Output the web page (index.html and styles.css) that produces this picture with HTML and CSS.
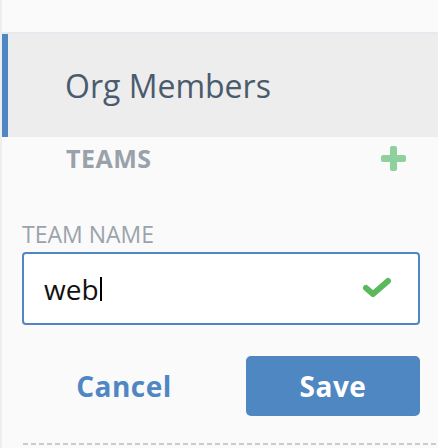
FILE: index.html
```html
<!DOCTYPE html>
<html>
<head>
<meta charset="utf-8">
<link rel="stylesheet" href="styles.css">
</head>
<body>
<div class="panel">
  <div class="topbar"></div>
  <div class="nav-item">Org Members</div>
  <div class="teams-row">
    <span class="teams-title">TEAMS</span>
    <svg class="plus" width="25" height="25" viewBox="0 0 25 25"><rect x="9" y="0" width="7" height="25" rx="2" fill="#8fd19e"/><rect x="0" y="9" width="25" height="7" rx="2" fill="#8fd19e"/></svg>
  </div>
  <div class="form">
    <div class="label">TEAM NAME</div>
    <div class="input">
      <span class="value">web</span><span class="caret"></span>
      <svg class="check" width="32" height="24" viewBox="0 0 32 24"><polyline points="4,11 11,17 26,4" fill="none" stroke="#5cb85c" stroke-width="6" stroke-linecap="round" stroke-linejoin="round"/></svg>
    </div>
    <div class="actions">
      <div class="cancel">Cancel</div>
      <div class="save">Save</div>
    </div>
    <div class="dashed"></div>
  </div>
</div>
</body>
</html>
```
FILE: styles.css
```css
html, body {
  margin: 0;
  padding: 0;
  background: #fafafa;
  font-family: "Open Sans", "Noto Sans", sans-serif;
}
.panel {
  border-left: 2px solid #eceeef;
  min-height: 448px;
  box-sizing: border-box;
  display: flex;
  flex-direction: column;
}
.topbar {
  height: 32px;
  border-bottom: 2px solid #e6eaee;
}
.nav-item {
  height: 103px;
  background: #ededed;
  border-left: 6px solid #4f87c2;
  padding-left: 57px;
  display: flex;
  align-items: center;
  font-size: 32px;
  line-height: 32px;
  color: #4a5b6e;
}
.teams-row {
  margin-top: 9px;
  padding: 0 32px 0 64px;
  height: 25px;
  display: flex;
  align-items: center;
  justify-content: space-between;
}
.teams-title {
  font-size: 25px;
  line-height: 25px;
  font-weight: 700;
  color: #99a1aa;
  letter-spacing: 0.5px;
}
.plus {
  display: block;
}
.form {
  padding: 0 18px 0 20px;
  display: flex;
  flex-direction: column;
}
.label {
  margin-top: 52px;
  font-size: 23px;
  line-height: 23px;
  color: #9aa3ab;
}
.input {
  margin-top: 6px;
  height: 73px;
  box-sizing: border-box;
  border: 2px solid #4f87c2;
  border-radius: 4px;
  background: #fff;
  display: flex;
  align-items: center;
  padding: 0 24px 0 20px;
}
.value {
  font-size: 28px;
  line-height: 28px;
  color: #111;
}
.caret {
  width: 2px;
  height: 24px;
  background: #000;
  margin-left: 1px;
}
.check {
  margin-left: auto;
  display: block;
}
.actions {
  margin-top: 31px;
  height: 60px;
  display: flex;
  gap: 20px;
}
.cancel {
  flex: 1;
  display: flex;
  align-items: center;
  justify-content: center;
  font-size: 28px;
  font-weight: 700;
  color: #4f87c2;
  letter-spacing: 0.5px;
}
.save {
  width: 174px;
  border-radius: 5px;
  background: #4f87c2;
  color: #fff;
  display: flex;
  align-items: center;
  justify-content: center;
  font-size: 28px;
  font-weight: 700;
  letter-spacing: 0.5px;
}
.dashed {
  margin-top: 27px;
  margin-left: 1px;
  margin-right: -18px;
  height: 2px;
  background: repeating-linear-gradient(90deg, #cccccc 0 5px, transparent 5px 8px);
}
```
